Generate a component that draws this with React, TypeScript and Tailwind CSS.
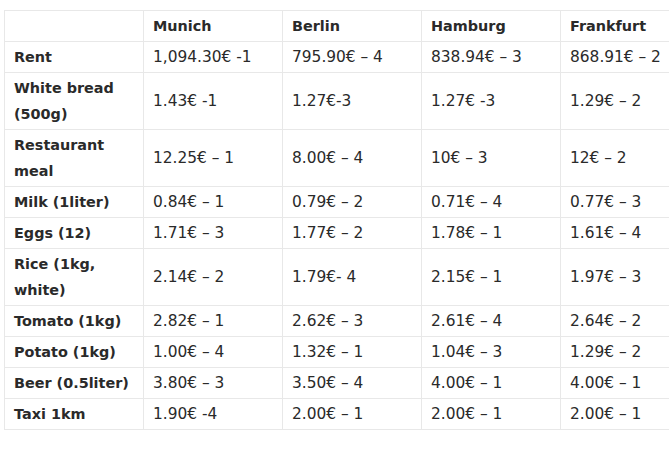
import React from "react";

const cities = ["Munich", "Berlin", "Hamburg", "Frankfurt"];
const rows: [string, string[]][] = [
  ["Rent", ["1,094.30€ -1", "795.90€ – 4", "838.94€ – 3", "868.91€ – 2"]],
  ["White bread (500g)", ["1.43€ -1", "1.27€-3", "1.27€ -3", "1.29€ – 2"]],
  ["Restaurant meal", ["12.25€ – 1", "8.00€ – 4", "10€ – 3", "12€ – 2"]],
  ["Milk (1liter)", ["0.84€ – 1", "0.79€ – 2", "0.71€ – 4", "0.77€ – 3"]],
  ["Eggs (12)", ["1.71€ – 3", "1.77€ – 2", "1.78€ – 1", "1.61€ – 4"]],
  ["Rice (1kg, white)", ["2.14€ – 2", "1.79€- 4", "2.15€ – 1", "1.97€ – 3"]],
  ["Tomato (1kg)", ["2.82€ – 1", "2.62€ – 3", "2.61€ – 4", "2.64€ – 2"]],
  ["Potato (1kg)", ["1.00€ – 4", "1.32€ – 1", "1.04€ – 3", "1.29€ – 2"]],
  ["Beer (0.5liter)", ["3.80€ – 3", "3.50€ – 4", "4.00€ – 1", "4.00€ – 1"]],
  ["Taxi 1km", ["1.90€ -4", "2.00€ – 1", "2.00€ – 1", "2.00€ – 1"]],
];

export default function App() {
  const cell = "border border-[#e8e8e8] px-[9px] py-[2px] align-middle text-left";
  return (
    <div className="w-[669px] h-[455px] overflow-hidden bg-white">
      <div className="pt-[10px] pl-[4px]">
        <table
          className="table-fixed border-collapse w-[696px] leading-[26px] text-[#2a2a2a]"
          style={{ fontFamily: '"DejaVu Sans", Verdana, sans-serif' }}
        >
          <colgroup>
            <col className="w-[139px]" />
            <col className="w-[139px]" />
            <col className="w-[139px]" />
            <col className="w-[139px]" />
            <col className="w-[140px]" />
          </colgroup>
          <thead>
            <tr>
              <th className={cell + " font-bold text-[14.4px]"}></th>
              {cities.map((c) => (
                <th key={c} className={cell + " font-bold text-[14.4px]"}>
                  {c}
                </th>
              ))}
            </tr>
          </thead>
          <tbody>
            {rows.map(([label, vals]) => (
              <tr key={label}>
                <td className={cell + " font-bold text-[14.4px]"}>{label}</td>
                {vals.map((v, i) => (
                  <td key={i} className={cell + " text-[15.4px]"}>
                    {v}
                  </td>
                ))}
              </tr>
            ))}
          </tbody>
        </table>
      </div>
    </div>
  );
}
